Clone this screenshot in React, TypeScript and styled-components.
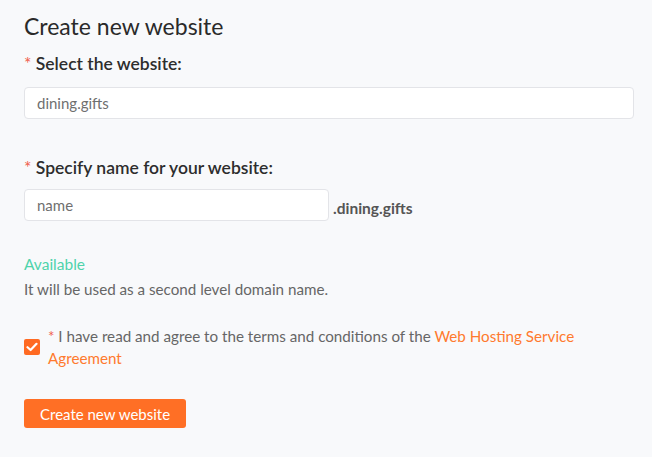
import styled, { createGlobalStyle } from "styled-components";

const GlobalStyle = createGlobalStyle`
  html, body {
    margin: 0;
    background: #f8f9fb;
    font-family: Lato, "Open Sans", sans-serif;
  }
`;

export default function App() {
  return (
    <Page>
      <GlobalStyle />
      <Title>Create new website</Title>

      <Label>
        <Star>*</Star> Select the website:
      </Label>
      <Field $wide>dining.gifts</Field>

      <Label $top={37}>
        <Star>*</Star> Specify name for your website:
      </Label>
      <NameRow>
        <Field>name</Field>
        <Suffix>.dining.gifts</Suffix>
      </NameRow>

      <Available>Available</Available>
      <Hint>It will be used as a second level domain name.</Hint>

      <AgreeRow>
        <Checkbox>
          <svg width="12" height="10" viewBox="0 0 12 10">
            <path d="M1.5 5.2 L4.6 8 L10.5 1.8" fill="none" stroke="#fff" strokeWidth="2.2" strokeLinecap="round" strokeLinejoin="round" />
          </svg>
        </Checkbox>
        <AgreeText>
          <Star>*</Star> I have read and agree to the terms and conditions of the{" "}
          <Link>Web Hosting Service Agreement</Link>
        </AgreeText>
      </AgreeRow>

      <SubmitButton>Create new website</SubmitButton>
    </Page>
  );
}

const Page = styled.div`
  padding: 10px 18px 0 24px;
  display: flex;
  flex-direction: column;
  align-items: flex-start;
`;

const Title = styled.h1`
  margin: 0;
  font-size: 23px;
  font-weight: 400;
  line-height: 32px;
  color: #2a2a2a;
`;

const Label = styled.div<{ $top?: number }>`
  margin-top: ${p => p.$top ?? 10}px;
  font-size: 17.5px;
  font-weight: 600;
  line-height: 24px;
  color: #2d2d2d;
`;

const Star = styled.span`
  color: #f0604d;
  font-weight: 400;
`;

const Field = styled.div<{ $wide?: boolean }>`
  box-sizing: border-box;
  width: ${p => (p.$wide ? "100%" : "305px")};
  height: 32px;
  margin-top: ${p => (p.$wide ? "11px" : "0")};
  padding: 0 12px;
  display: flex;
  align-items: center;
  background: #fff;
  border: 1px solid #e3e4e8;
  border-radius: 4px;
  font-size: 15px;
  color: #6f6f6f;
`;

const NameRow = styled.div`
  margin-top: 9px;
  display: flex;
  align-items: center;
  gap: 4px;
`;

const Suffix = styled.span`
  font-size: 15.5px;
  font-weight: 700;
  color: #555;
  padding-top: 6px;
`;

const Available = styled.div`
  margin-top: 32px;
  font-size: 15.5px;
  line-height: 22px;
  color: #4fd3ab;
`;

const Hint = styled.div`
  margin-top: 3px;
  font-size: 15.2px;
  line-height: 22px;
  color: #666;
`;

const AgreeRow = styled.div`
  margin-top: 25px;
  display: flex;
  align-items: flex-start;
  gap: 8px;
`;

const Checkbox = styled.span`
  flex: none;
  width: 16px;
  height: 16px;
  margin-top: 14px;
  border-radius: 2px;
  background: #ff6a22;
  display: flex;
  align-items: center;
  justify-content: center;
`;

const AgreeText = styled.div`
  font-size: 15.2px;
  line-height: 22px;
  color: #666;
`;

const Link = styled.span`
  color: #ff7a2e;
`;

const SubmitButton = styled.button`
  margin-top: 30px;
  height: 29px;
  padding: 0 16px;
  border: none;
  border-radius: 3px;
  background: #ff6f25;
  color: #fff;
  font-family: Lato, "Open Sans", sans-serif;
  font-size: 15px;
`;
